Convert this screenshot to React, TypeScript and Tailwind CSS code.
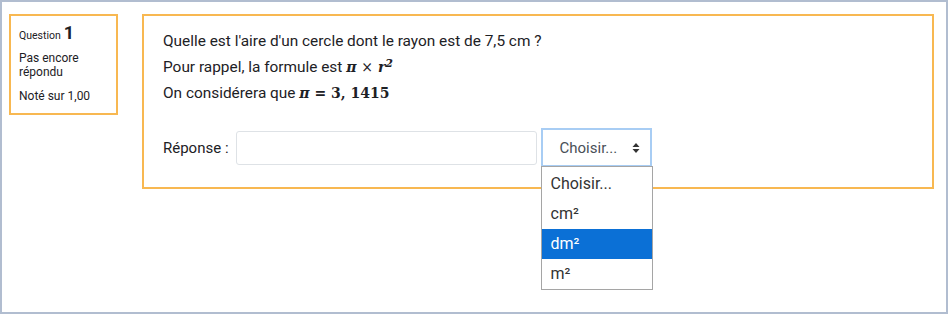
export default function App() {
  const options = ["Choisir...", "cm²", "dm²", "m²"];

  return (
    <div className="h-[314px] w-[948px] bg-white font-['Roboto',sans-serif] text-[#1d2125]">
      <div className="flex h-full w-full items-start gap-[24px] border-2 border-[#b1bdd0] pl-[7px] pt-[12px]">
        {/* info */}
        <div className="h-[101px] w-[109px] shrink-0 border-2 border-[#f8b851] px-[8px] pt-[8px] text-[12px] leading-[14px]">
          <div className="flex items-baseline gap-[3px]">
            <span className="text-[10.5px]">Question</span>
            <span className="text-[18px] font-bold leading-[18px]">1</span>
          </div>
          <div className="mt-[8px]">Pas encore<br />répondu</div>
          <div className="mt-[10px]">Noté sur 1,00</div>
        </div>

        {/* question */}
        <div className="relative h-[175px] w-[792px] border-2 border-[#f8b851] pl-[19px] pt-[12px] text-[15px] leading-[26px]">
          <div className="text-[15.4px]">
            <p>Quelle est l'aire d'un cercle dont le rayon est de 7,5 cm ?</p>
            <p>
              Pour rappel, la formule est{" "}
              <span className="font-['DejaVu_Serif',serif] text-[14px] font-bold italic">
                π <span className="not-italic font-normal">×</span> r<sup className="text-[11px]">2</sup>
              </span>
            </p>
            <p>
              On considérera que{" "}
              <span className="font-['DejaVu_Serif',serif] text-[14px] font-bold">
                <span className="italic">π</span> = 3, 1415
              </span>
            </p>
          </div>

          <div className="mt-[22px] flex items-center">
            <span className="mr-[7px]">Réponse :</span>
            <div className="h-[34px] w-[301px] rounded-[3px] border border-[#dee2e6] bg-white" />
            <div className="relative ml-[4px]">
              <div className="flex h-[39px] w-[111px] items-center justify-between border-2 border-[#a8cdf4] pl-[17px] pr-[10px] text-[15px] text-[#495057]">
                <span>Choisir...</span>
                <svg width="8" height="12" viewBox="0 0 8 12" className="text-[#333]">
                  <path d="M4 1 L7.5 5 H0.5 Z M4 11 L7.5 7 H0.5 Z" fill="currentColor" />
                </svg>
              </div>
              <div className="absolute left-0 top-[38px] z-10 w-[112px] border border-[#a5a5a5] bg-white pt-[2px] text-[16px] leading-[30px] text-[#333]">
                {options.map((o) => (
                  <div
                    key={o}
                    className={o === "dm²" ? "bg-[#0b70d6] pl-[9px] text-white" : "pl-[9px]"}
                  >
                    {o}
                  </div>
                ))}
              </div>
            </div>
          </div>
        </div>
      </div>
    </div>
  );
}
